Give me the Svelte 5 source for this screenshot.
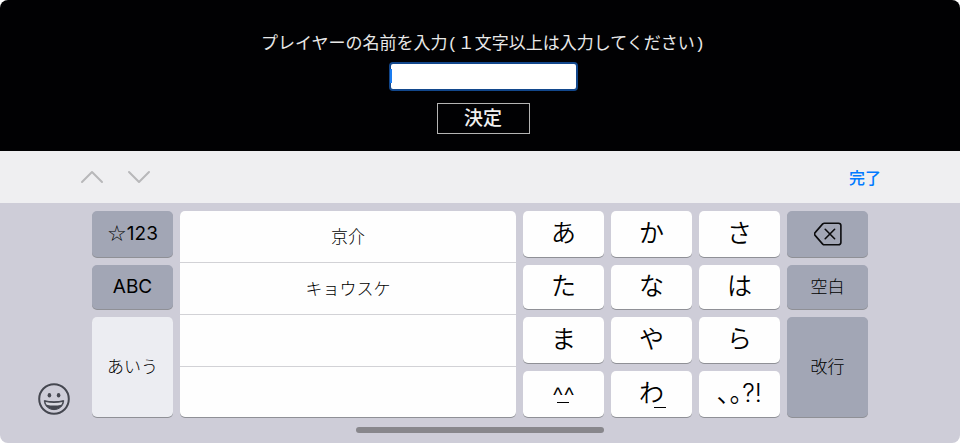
<script lang="ts">
  interface Kana {
    label: string;
    small?: boolean;
    mark?: 'center' | 'right';
  }

  const kanaKeys: Kana[] = [
    { label: 'あ' },
    { label: 'か' },
    { label: 'さ' },
    { label: 'た' },
    { label: 'な' },
    { label: 'は' },
    { label: 'ま' },
    { label: 'や' },
    { label: 'ら' },
    { label: '^^', small: true, mark: 'center' },
    { label: 'わ', mark: 'right' },
    { label: '､｡?!' }
  ];

  const candidates = ['京介', 'キョウスケ', '', ''];

  let playerName = $state('');

  function choose(word: string) {
    if (word) playerName = word;
  }

  function type(label: string) {
    playerName += label.charAt(0);
  }
</script>

<div class="screen">
  <form class="prompt" onsubmit={(e) => e.preventDefault()}>
    <label for="player-name">プレイヤーの名前を入力(１文字以上は入力してください)</label>
    <div class="field">
      <input id="player-name" type="text" autocomplete="off" bind:value={playerName} />
      {#if !playerName}
        <span class="caret"></span>
      {/if}
    </div>
    <button class="submit" type="submit">決定</button>
  </form>

  <div class="accessory">
    <div class="arrows">
      <button type="button" aria-label="前へ">
        <svg width="24" height="14" viewBox="0 0 24 14"><path d="M2 12 12 2l10 10" /></svg>
      </button>
      <button type="button" aria-label="次へ">
        <svg width="24" height="14" viewBox="0 0 24 14"><path d="M2 2l10 10L22 2" /></svg>
      </button>
    </div>
    <button class="done" type="button">完了</button>
  </div>

  <div class="keyboard">
    <div class="board">
      <div class="gutter">
        <button class="emoji" type="button" aria-label="絵文字">
          <svg width="32" height="32" viewBox="0 0 32 32">
            <circle cx="16" cy="16" r="14.8" fill="none" stroke="#454750" stroke-width="2" />
            <ellipse cx="11.4" cy="12.3" rx="1.8" ry="2.2" fill="#454750" />
            <ellipse cx="20.6" cy="12.3" rx="1.8" ry="2.2" fill="#454750" />
            <path
              d="M6.3 17.6c6 1.6 13.4 1.6 19.4 0-.2 5.2-4.4 9-9.7 9s-9.5-3.8-9.7-9z"
              fill="#454750"
              stroke="#454750"
              stroke-linejoin="round"
            />
            <path
              d="M7.5 19.1c5.4 1.2 11.6 1.2 17 0-.3 1-.7 1.9-1.2 2.6-4.6 1.2-10 1.2-14.6 0-.6-.8-1-1.6-1.2-2.6z"
              fill="#d8d8df"
            />
          </svg>
        </button>
      </div>

      <div class="keys">
        <button class="key dark mode" type="button"><span class="star">☆</span>123</button>
        <button class="key dark abc" type="button">ABC</button>
        <button class="key light kana-mode" type="button">あいう</button>

        <div class="candidates">
          {#each candidates as word}
            <button type="button" aria-label={word || '候補なし'} onclick={() => choose(word)}>{word}</button>
          {/each}
        </div>

        <div class="kana">
          {#each kanaKeys as key}
            <button class="key" class:small={key.small} type="button" onclick={() => type(key.label)}>
              <span class="glyph">
                {key.label}
                {#if key.mark}
                  <span class="mark {key.mark}"></span>
                {/if}
              </span>
            </button>
          {/each}
        </div>

        <button class="key dark delete" type="button" aria-label="削除">
          <svg width="28" height="24" viewBox="0 0 28 24">
            <path
              d="M10.4 1.2h14.1a2.4 2.4 0 0 1 2.4 2.4v16.8a2.4 2.4 0 0 1-2.4 2.4H10.4a2.4 2.4 0 0 1-1.7-.7L1.3 13.6a2.3 2.3 0 0 1 0-3.2L8.7 1.9a2.4 2.4 0 0 1 1.7-.7z"
            />
            <path d="M11.2 7.3l9.4 9.4M20.6 7.3l-9.4 9.4" />
          </svg>
        </button>
        <button class="key dark space" type="button">空白</button>
        <button class="key dark enter" type="button">改行</button>
      </div>

      <div class="gutter"></div>
    </div>
    <div class="home-bar"></div>
  </div>
</div>

<style>
  :global(body) {
    background: #fff;
  }

  .screen {
    border-radius: 8px;
    overflow: hidden;
    font-family: Inter, 'Noto Sans CJK JP', sans-serif;
    color: #000;
  }

  button {
    margin: 0;
    padding: 0;
    border: none;
    background: none;
    font: inherit;
    color: inherit;
    cursor: pointer;
  }

  svg {
    display: block;
  }

  .prompt {
    display: flex;
    flex-direction: column;
    align-items: center;
    padding: 34px 0 17px 6px;
    background: #010103;
    color: #e8e8e8;
    font-family: 'Liberation Mono', 'Noto Sans CJK JP', monospace;
    font-size: 17px;
  }

  .prompt label {
    line-height: 22px;
  }

  .field {
    position: relative;
    margin: 6px 0 12px;
  }

  .field input {
    display: block;
    box-sizing: border-box;
    width: 189px;
    height: 29px;
    padding: 2px 4px;
    border: 2px solid #12478c;
    border-radius: 4px;
    outline: none;
    background: #fff;
    color: #000;
    font-size: 17px;
    font-family: 'Noto Sans CJK JP', sans-serif;
  }

  .caret {
    position: absolute;
    top: 7px;
    left: 1px;
    width: 2px;
    height: 14px;
    background: #1a7cf0;
  }

  .submit {
    box-sizing: border-box;
    width: 93px;
    height: 31px;
    padding-top: 2px;
    border: 1px solid #b4b4b4;
    font-size: 19px;
    line-height: 26px;
    font-weight: 500;
    color: #f0f0f0;
  }

  .accessory {
    display: flex;
    justify-content: space-between;
    align-items: center;
    height: 52px;
    padding: 0 79px 0 80px;
    background: #efeff1;
  }

  .arrows {
    display: flex;
    gap: 23px;
  }

  .arrows path {
    fill: none;
    stroke: #b8b8ba;
    stroke-width: 2;
    stroke-linecap: round;
    stroke-linejoin: round;
  }

  .done {
    color: #007aff;
    font-size: 16px;
    font-weight: 500;
  }

  .keyboard {
    padding: 8px 0 10px;
    background: #cecdd8;
  }

  .board {
    display: flex;
  }

  .gutter {
    display: flex;
    flex: 0 0 92px;
    align-items: flex-end;
  }

  .emoji {
    margin: 0 0 2px 38px;
  }

  .keys {
    display: grid;
    flex: 1;
    grid-template-columns: 81fr 336fr 257fr 81fr;
    grid-template-rows: 46px 44px 46px 46px;
    grid-template-areas:
      'mode cand kana delete'
      'abc cand kana space'
      'hira cand kana enter'
      'hira cand kana enter';
    gap: 8px 7px;
    min-width: 0;
  }

  .key {
    display: flex;
    align-items: center;
    justify-content: center;
    min-width: 0;
    border-radius: 5px;
    background: #fefefe;
    box-shadow: 0 1px 0 #8f9096;
    font-size: 25px;
    line-height: 26px;
  }

  .dark {
    background: #a2a6b5;
    font-size: 17px;
    font-weight: 300;
  }

  .light {
    background: #ecedf2;
    font-size: 17px;
    font-weight: 300;
  }

  .mode {
    grid-area: mode;
  }

  .mode,
  .abc {
    font-size: 19px;
    font-weight: 400;
  }

  .star {
    font-family: 'DejaVu Sans', sans-serif;
    font-size: 22px;
  }

  .abc {
    grid-area: abc;
  }

  .kana-mode {
    grid-area: hira;
  }

  .delete {
    grid-area: delete;
  }

  .delete path {
    fill: none;
    stroke: #0b0b0d;
    stroke-width: 1.6;
    stroke-linecap: round;
    stroke-linejoin: round;
  }

  .space {
    grid-area: space;
  }

  .enter {
    grid-area: enter;
  }

  .candidates {
    display: flex;
    flex-direction: column;
    grid-area: cand;
    border-radius: 5px;
    background: #fefefe;
    box-shadow: 0 1px 0 #8f9096;
    overflow: hidden;
  }

  .candidates button {
    box-sizing: border-box;
    height: 52px;
    padding-bottom: 2px;
    border-bottom: 1px solid #d2d2d6;
    font-size: 17px;
    font-weight: 300;
  }

  .candidates button:last-child {
    flex: 1;
    border-bottom: none;
  }

  .kana {
    display: grid;
    grid-area: kana;
    grid-template-columns: repeat(3, 1fr);
    grid-template-rows: 46px 44px 46px 46px;
    gap: 8px 7px;
  }

  .kana .key {
    padding-bottom: 2px;
    font-weight: 350;
  }

  .kana .small {
    padding: 4px 0 0;
  }

  .glyph {
    position: relative;
  }

  .mark {
    position: absolute;
    bottom: -2px;
    width: 12px;
    height: 1px;
    background: #000;
  }

  .mark.center {
    left: calc(50% - 6px);
    bottom: 6px;
  }

  .mark.right {
    right: -2px;
  }

  .home-bar {
    width: 248px;
    height: 6px;
    margin: 10px auto 0;
    border-radius: 3px;
    background: #88878c;
  }
</style>
